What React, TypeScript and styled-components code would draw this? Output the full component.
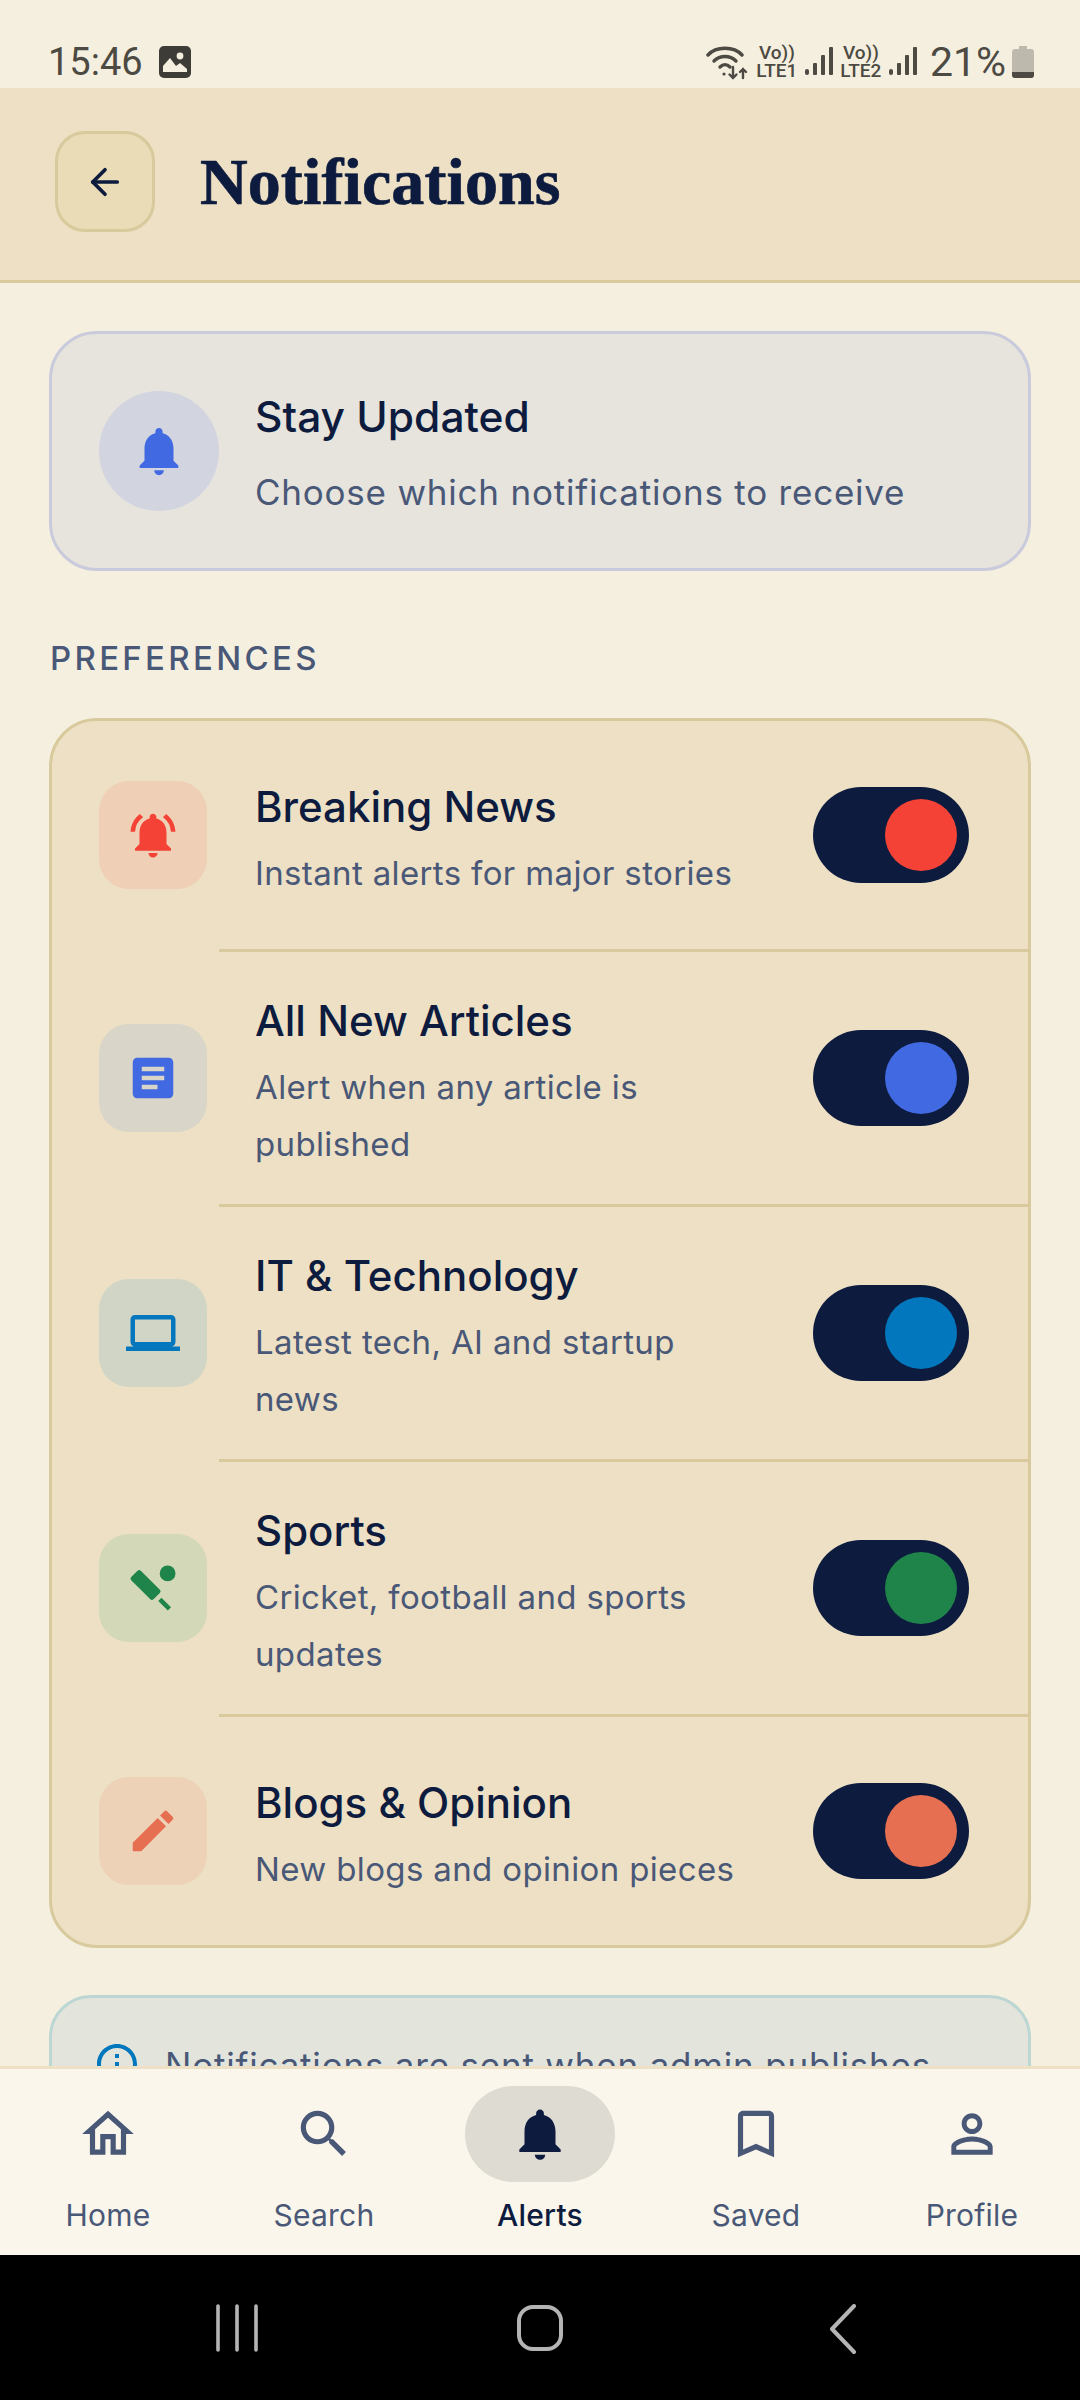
import React from "react";
import styled, { createGlobalStyle } from "styled-components";
import {
  MdNotifications,
  MdNotificationsActive,
  MdArticle,
  MdOutlineLaptop,
  MdSportsCricket,
  MdEdit,
  MdOutlineHome,
  MdSearch,
  MdBookmarkBorder,
  MdPersonOutline,
  MdInfoOutline,
} from "react-icons/md";
import { ArrowLeft } from "lucide-react";

const navy = "#0D1B3E";
const slate = "#4A5878";

const Global = createGlobalStyle`
  html, body { margin: 0; padding: 0; background: #000; }
  body { font-family: Inter, "Noto Sans", sans-serif; }
  * { box-sizing: border-box; }
`;

const Screen = styled.div`
  width: 1080px;
  height: 2400px;
  display: flex;
  flex-direction: column;
  background: #f5efe0;
  overflow: hidden;
`;

const StatusBar = styled.div`
  height: 88px;
  flex: none;
  display: flex;
  align-items: center;
  justify-content: space-between;
  padding: 36px 46px 0 48px;
  color: #4c4a42;
`;
const StatusGroup = styled.div<{ $gap: number }>`
  display: flex;
  align-items: center;
  gap: ${(p) => p.$gap}px;
`;
const Time = styled.span`
  font-family: Roboto, sans-serif;
  font-size: 38px;
  line-height: 44px;
`;
const Percent = styled.span`
  font-family: Roboto, sans-serif;
  font-size: 41px;
  line-height: 44px;
  margin-left: 6px;
`;
const Sim = styled.span`
  display: flex;
  flex-direction: column;
  align-items: center;
  width: 42px;
  font-family: Roboto, sans-serif;
  font-weight: 500;
  font-size: 19px;
  line-height: 18px;
`;

const Header = styled.header`
  height: 195px;
  flex: none;
  display: flex;
  align-items: center;
  gap: 45px;
  padding: 0 55px 5px;
  background: #ede0c4;
  border-bottom: 3px solid #d8ca9c;
`;
const BackButton = styled.button`
  width: 100px;
  height: 101px;
  padding: 0;
  display: flex;
  align-items: center;
  justify-content: center;
  color: ${navy};
  background: #e9dcb6;
  border: 3px solid #d8ca9c;
  border-radius: 30px;
`;
const Title = styled.h1`
  margin: 0;
  font-family: "Liberation Serif", serif;
  font-weight: 700;
  font-size: 66px;
  line-height: 80px;
  letter-spacing: 0.1px;
  -webkit-text-stroke: 0.7px ${navy};
  color: ${navy};
`;

const Content = styled.main`
  flex: 1;
  min-height: 0;
  overflow: hidden;
  display: flex;
  flex-direction: column;
  padding: 48px 49px 0;
`;

const HeroCard = styled.section`
  flex: none;
  height: 240px;
  display: flex;
  align-items: center;
  gap: 36px;
  padding: 0 47px;
  background: #e6e4dc;
  border: 3px solid #c9cbdc;
  border-radius: 48px;
`;
const HeroIcon = styled.div`
  width: 120px;
  height: 120px;
  flex: none;
  display: flex;
  align-items: center;
  justify-content: center;
  border-radius: 50%;
  color: #4169e1;
  background: #d2d4e0;
`;
const HeroCopy = styled.div`
  padding-top: 4px;
`;
const HeroTitle = styled.div`
  font-size: 42.5px;
  font-weight: 500;
  line-height: 56px;
  color: ${navy};
`;
const HeroText = styled.div`
  margin-top: 22px;
  font-size: 35px;
  line-height: 50px;
  letter-spacing: 0.78px;
  color: ${slate};
`;

const SectionLabel = styled.h2`
  margin: 64px 0 0 1px;
  height: 46px;
  font-size: 33px;
  font-weight: 500;
  line-height: 46px;
  letter-spacing: 3.3px;
  color: ${slate};
`;

const ListCard = styled.section`
  flex: none;
  margin-top: 37px;
  background: #ede0c4;
  border: 3px solid #d8ca9c;
  border-radius: 48px;
  overflow: hidden;
`;
const Row = styled.div`
  min-height: 228px;
  display: flex;
  align-items: center;
  padding: 0 59px 0 47px;
`;
const RowIcon = styled.div<{ $bg: string; $fg: string }>`
  width: 108px;
  height: 108px;
  flex: none;
  display: flex;
  align-items: center;
  justify-content: center;
  border-radius: 30px;
  background: ${(p) => p.$bg};
  color: ${(p) => p.$fg};
`;
const RowText = styled.div`
  flex: 1;
  min-width: 0;
  margin-left: 48px;
  padding: 41px 60px 31px 0;
`;
const RowTitle = styled.div`
  font-size: 42px;
  font-weight: 500;
  line-height: 56px;
  color: ${navy};
`;
const RowSub = styled.div`
  margin-top: 10px;
  font-size: 33px;
  line-height: 57px;
  letter-spacing: 0.36px;
  color: ${slate};
`;
const Divider = styled.div`
  height: 3px;
  margin-left: 167px;
  background: #d8ca9c;
`;
const Toggle = styled.div`
  width: 156px;
  height: 96px;
  flex: none;
  display: flex;
  align-items: center;
  justify-content: flex-end;
  padding-right: 12px;
  border-radius: 48px;
  background: ${navy};
`;
const Knob = styled.div<{ $color: string }>`
  width: 72px;
  height: 72px;
  border-radius: 50%;
  background: ${(p) => p.$color};
`;

const InfoCard = styled.section`
  flex: none;
  margin-top: 47px;
  display: flex;
  align-items: flex-start;
  gap: 24px;
  padding: 42px 44px 44px 41px;
  background: #e3e5dc;
  border: 3px solid #bcd6d4;
  border-radius: 42px;
`;
const InfoIcon = styled.div`
  flex: none;
  height: 48px;
  color: #0277bd;
`;
const InfoText = styled.div`
  font-size: 35px;
  line-height: 50px;
  letter-spacing: 0.8px;
  color: ${slate};
`;

const BottomNav = styled.nav`
  flex: none;
  height: 189px;
  display: grid;
  grid-template-columns: repeat(5, 1fr);
  background: #faf6eb;
  border-top: 3px solid #ede0c4;
`;
const NavItem = styled.div<{ $active?: boolean }>`
  display: flex;
  flex-direction: column;
  align-items: center;
  padding-top: 17px;
  color: ${(p) => (p.$active ? navy : slate)};
`;
const NavIcon = styled.div<{ $active?: boolean }>`
  width: 150px;
  height: 96px;
  display: flex;
  align-items: center;
  justify-content: center;
  border-radius: 48px;
  background: ${(p) => (p.$active ? "#dedbd2" : "transparent")};
`;
const NavLabel = styled.div<{ $active?: boolean }>`
  margin-top: 13px;
  font-size: 30px;
  line-height: 40px;
  letter-spacing: 0.2px;
  font-weight: ${(p) => (p.$active ? 500 : 400)};
`;

const SystemBar = styled.div`
  flex: none;
  height: 145px;
  display: grid;
  grid-template-columns: repeat(3, 303px);
  justify-content: center;
  justify-items: center;
  padding-top: 49px;
  background: #000;
`;

const Signal = () => (
  <svg width="30" height="38" viewBox="0 0 30 38" fill="#4c4a42">
    <rect x="1" y="26" width="4" height="6" rx="2" />
    <rect x="9" y="20" width="4" height="12" rx="1" />
    <rect x="17" y="12" width="4" height="20" rx="1" />
    <rect x="25" y="4" width="4" height="28" rx="1" />
  </svg>
);

const rows = [
  { title: "Breaking News", sub: "Instant alerts for major stories", bg: "#efcfb5", fg: "#f44336", Icon: MdNotificationsActive },
  { title: "All New Articles", sub: "Alert when any article is published", bg: "#d9d5c8", fg: "#4169e1", Icon: MdArticle },
  { title: "IT & Technology", sub: "Latest tech, AI and startup news", bg: "#d1d5c5", fg: "#0277bd", Icon: MdOutlineLaptop },
  { title: "Sports", sub: "Cricket, football and sports updates", bg: "#d3d8b9", fg: "#1e8449", Icon: MdSportsCricket },
  { title: "Blogs & Opinion", sub: "New blogs and opinion pieces", bg: "#eed2b8", fg: "#e76f51", Icon: MdEdit },
];

const tabs = [
  { label: "Home", Icon: MdOutlineHome },
  { label: "Search", Icon: MdSearch },
  { label: "Alerts", Icon: MdNotifications, active: true },
  { label: "Saved", Icon: MdBookmarkBorder },
  { label: "Profile", Icon: MdPersonOutline },
];

export default function App() {
  return (
    <Screen>
      <Global />
      <StatusBar>
        <StatusGroup $gap={16}>
          <Time>15:46</Time>
          <svg width="32" height="32" viewBox="0 0 32 32">
            <rect width="32" height="32" rx="5" fill="#3e3c36" />
            <circle cx="21" cy="10" r="3.4" fill="#f5efe0" />
            <path d="M4 26V20l7-8 6 8 4-3 7 6v3z" fill="#f5efe0" />
          </svg>
        </StatusGroup>
        <StatusGroup $gap={6}>
          <svg width="44" height="38" viewBox="0 0 44 38" fill="none" stroke="#4c4a42" strokeWidth="3.4" strokeLinecap="round">
            <path d="M2 12C10 3 28 3 36 12" />
            <path d="M8 18c6-6 16-6 22 0" />
            <path d="M14 24c3-3 7-3 10 0" />
            <circle cx="18" cy="31" r="1.6" fill="#4c4a42" stroke="none" />
            <path d="M27 24v11M23.5 31.5l3.5 3.5 3.5-3.5M37 35v-9M34 29l3-3 3 3" strokeWidth="2.4" />
          </svg>
          <Sim>
            <span>Vo))</span>
            <span>LTE1</span>
          </Sim>
          <Signal />
          <Sim>
            <span>Vo))</span>
            <span>LTE2</span>
          </Sim>
          <Signal />
          <Percent>21%</Percent>
          <svg width="22" height="32" viewBox="0 0 22 32">
            <path d="M7 0h8v3h4a3 3 0 0 1 3 3v23a3 3 0 0 1-3 3H3a3 3 0 0 1-3-3V6a3 3 0 0 1 3-3h4z" fill="#bdb9ad" />
            <path d="M0 26h22v3a3 3 0 0 1-3 3H3a3 3 0 0 1-3-3z" fill="#4c4a42" />
          </svg>
        </StatusGroup>
      </StatusBar>

      <Header>
        <BackButton aria-label="Back">
          <ArrowLeft size={42} strokeWidth={2.1} />
        </BackButton>
        <Title>Notifications</Title>
      </Header>

      <Content>
        <HeroCard>
          <HeroIcon>
            <MdNotifications size={58} />
          </HeroIcon>
          <HeroCopy>
            <HeroTitle>Stay Updated</HeroTitle>
            <HeroText>Choose which notifications to receive</HeroText>
          </HeroCopy>
        </HeroCard>

        <SectionLabel>PREFERENCES</SectionLabel>

        <ListCard>
          {rows.map((r, i) => (
            <React.Fragment key={r.title}>
              {i > 0 && <Divider />}
              <Row>
                <RowIcon $bg={r.bg} $fg={r.fg}>
                  <r.Icon size={54} />
                </RowIcon>
                <RowText>
                  <RowTitle>{r.title}</RowTitle>
                  <RowSub>{r.sub}</RowSub>
                </RowText>
                <Toggle>
                  <Knob $color={r.fg} />
                </Toggle>
              </Row>
            </React.Fragment>
          ))}
        </ListCard>

        <InfoCard>
          <InfoIcon>
            <MdInfoOutline size={48} />
          </InfoIcon>
          <InfoText>Notifications are sent when admin publishes new content</InfoText>
        </InfoCard>
      </Content>

      <BottomNav>
        {tabs.map((t) => (
          <NavItem key={t.label} $active={t.active}>
            <NavIcon $active={t.active}>
              <t.Icon size={62} />
            </NavIcon>
            <NavLabel $active={t.active}>{t.label}</NavLabel>
          </NavItem>
        ))}
      </BottomNav>

      <SystemBar>
        <svg width="44" height="48" viewBox="0 0 44 48" stroke="#b4b4b4" strokeWidth="3.6" strokeLinecap="round">
          <path d="M3 2v44M22 2v44M41 2v44" />
        </svg>
        <svg width="48" height="48" viewBox="0 0 48 48" fill="none" stroke="#b4b4b4" strokeWidth="4">
          <rect x="3" y="3" width="42" height="42" rx="14" />
        </svg>
        <svg width="28" height="50" viewBox="0 0 28 50" fill="none" stroke="#b4b4b4" strokeWidth="4" strokeLinecap="round" strokeLinejoin="round">
          <path d="M25 2 3 25l22 23" />
        </svg>
      </SystemBar>
    </Screen>
  );
}
